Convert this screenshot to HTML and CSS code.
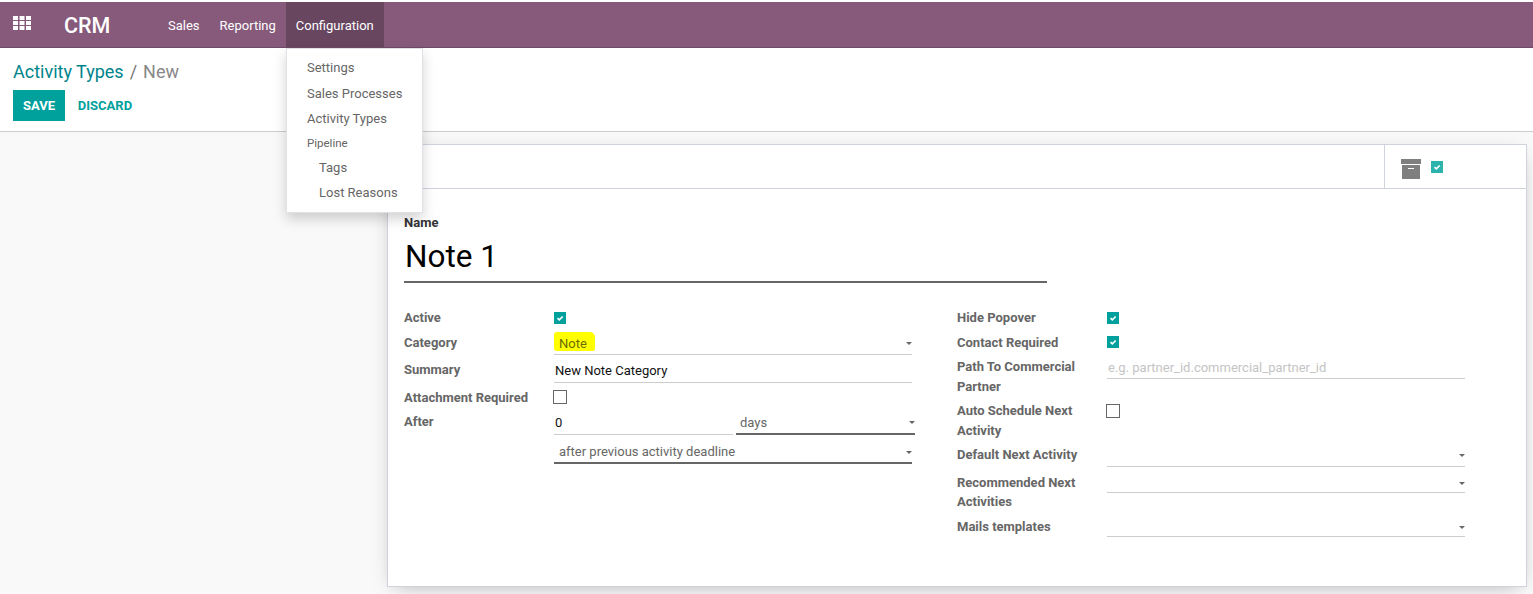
FILE: index.html
```html
<!DOCTYPE html>
<html lang="en">
<head>
<meta charset="utf-8">
<title>Activity Types - CRM</title>
<link rel="stylesheet" href="styles.css">
</head>
<body>
<header class="navbar">
  <a class="apps" aria-label="Apps">
    <svg width="18" height="14" viewBox="0 0 18 14"><path fill="#fff" d="M0 0h5v4H0zM6.500 0h5v4h-5zM13 0h5v4h-5zM0 5h5v4H0zM6.500 5h5v4h-5zM13 5h5v4h-5zM0 10h5v4H0zM6.500 10h5v4h-5zM13 10h5v4h-5z"/></svg>
  </a>
  <span class="brand">CRM</span>
  <nav class="menu">
    <a class="menu-item">Sales</a>
    <a class="menu-item">Reporting</a>
    <a class="menu-item active">Configuration</a>
  </nav>
</header>

<ul class="dropdown">
  <li class="dd-item">Settings</li>
  <li class="dd-item">Sales Processes</li>
  <li class="dd-item">Activity Types</li>
  <li class="dd-head">Pipeline</li>
  <li class="dd-item sub">Tags</li>
  <li class="dd-item sub">Lost Reasons</li>
</ul>

<section class="control-panel">
  <div class="breadcrumb"><a class="crumb-link">Activity Types</a><span class="crumb-sep">/</span><span class="crumb-cur">New</span></div>
  <div class="actions">
    <button class="btn-save">SAVE</button>
    <button class="btn-discard">DISCARD</button>
  </div>
</section>

<main class="content">
  <div class="sheet">
    <div class="sheet-top">
      <div class="button-box">
        <svg class="archive" width="20" height="20" viewBox="0 0 20 20"><path fill="#7f7f7f" d="M0 0h20v5H0zM1 6h18v14H1z"/><path fill="#fff" d="M7 9h6v1H7z"/></svg>
        <span class="check on"><svg viewBox="0 0 12 12" width="12" height="12"><path d="M3.500 6.200 5.300 7.800 8.700 4.500" fill="none" stroke="#fff" stroke-width="1.700"/></svg></span>
      </div>
    </div>
    <div class="sheet-body">
      <label class="name-label">Name</label>
      <div class="name-value">Note 1</div>
      <div class="groups">
        <div class="group">
          <div class="row r-active"><span class="lbl">Active</span><span class="val"><span class="check on"><svg viewBox="0 0 12 12" width="12" height="12"><path d="M3.500 6.200 5.300 7.800 8.700 4.500" fill="none" stroke="#fff" stroke-width="1.700"/></svg></span></span></div>
          <div class="row r-cat"><span class="lbl">Category</span><span class="val field select"><span class="mark">Note</span><i class="caret"></i></span></div>
          <div class="row r-sum"><span class="lbl">Summary</span><span class="val field dark">New Note Category</span></div>
          <div class="row r-att"><span class="lbl">Attachment Required</span><span class="val"><span class="check off"></span></span></div>
          <div class="row r-after"><span class="lbl">After</span>
            <span class="val after">
              <span class="field dark num">0</span>
              <span class="field select strong unit">days<i class="caret"></i></span>
            </span>
          </div>
          <div class="row r-dead"><span class="lbl"></span><span class="val field select strong">after previous activity deadline<i class="caret"></i></span></div>
        </div>
        <div class="group">
          <div class="row r2-hide"><span class="lbl">Hide Popover</span><span class="val"><span class="check on"><svg viewBox="0 0 12 12" width="12" height="12"><path d="M3.500 6.200 5.300 7.800 8.700 4.500" fill="none" stroke="#fff" stroke-width="1.700"/></svg></span></span></div>
          <div class="row r2-contact"><span class="lbl">Contact Required</span><span class="val"><span class="check on"><svg viewBox="0 0 12 12" width="12" height="12"><path d="M3.500 6.200 5.300 7.800 8.700 4.500" fill="none" stroke="#fff" stroke-width="1.700"/></svg></span></span></div>
          <div class="row r2-path"><span class="lbl">Path To Commercial Partner</span><span class="val field placeholder">e.g. partner_id.commercial_partner_id</span></div>
          <div class="row r2-auto"><span class="lbl">Auto Schedule Next Activity</span><span class="val"><span class="check off"></span></span></div>
          <div class="row r2-def"><span class="lbl">Default Next Activity</span><span class="val field select empty"><i class="caret"></i></span></div>
          <div class="row r2-rec"><span class="lbl">Recommended Next Activities</span><span class="val field select empty"><i class="caret"></i></span></div>
          <div class="row r2-mail"><span class="lbl">Mails templates</span><span class="val field select empty"><i class="caret"></i></span></div>
        </div>
      </div>
    </div>
  </div>
</main>
</body>
</html>
```
FILE: styles.css
```css
* { box-sizing: border-box; }
html, body { margin: 0; height: 100%; }
body {
  display: flex;
  flex-direction: column;
  height: 594px;
  overflow: hidden;
  background: #fff;
  font-family: Roboto, "Noto Sans", sans-serif;
  font-size: 13px;
  line-height: 20px;
  color: #666;
  padding-top: 2px;
  position: relative;
}

.navbar {
  height: 46px;
  flex: none;
  display: flex;
  align-items: stretch;
  background: #875a7b;
  border-bottom: 1px solid #6f4a66;
  color: #fff;
}
.apps { display: flex; align-items: center; padding: 0 0 3px 13px; width: 64px; }
.brand { font-size: 21.500px; font-weight: 500; line-height: 47px; width: 94px; }
.menu { display: flex; }
.menu-item { padding: 0 10px; line-height: 47px; height: 45px; color: #fff; }
.menu-item.active { background: #68465f; }

.dropdown {
  position: absolute;
  left: 286px;
  top: 48px;
  width: 137px;
  height: 165px;
  margin: 0;
  padding: 6px 0 0;
  list-style: none;
  background: #fff;
  border: 1px solid #dfe1e6;
  box-shadow: 0 6px 12px rgba(0, 0, 0, .175);
  z-index: 5;
}
.dd-item { height: 25px; line-height: 25px; padding-left: 20px; white-space: nowrap; }
.dd-item.sub { padding-left: 32px; }
.dd-item:nth-child(2), .dd-item:nth-child(3), .dd-head { position: relative; top: 1px; }
.dd-head { height: 25px; line-height: 25px; padding-left: 20px; font-size: 11.500px; }

.control-panel {
  height: 84px;
  flex: none;
  padding: 11px 13px 0;
  background: #fff;
  border-bottom: 1px solid #ccc;
}
.breadcrumb { font-size: 18px; line-height: 26px; height: 31px; }
.crumb-link { color: #00848c; }
.crumb-sep { padding: 0 6px; color: #777; }
.crumb-cur { color: #888; }
.actions { display: flex; align-items: stretch; height: 31px; }
.btn-save, .btn-discard {
  border: 0;
  padding: 0;
  font: 700 13px/31px Roboto, sans-serif;
}
.btn-save { width: 52px; background: #00a09d; color: #fff; }
.btn-discard { width: 80px; background: transparent; color: #00a09d; }

.content {
  flex: 1;
  min-height: 0;
  background: #f9f9f9;
  padding: 12px 6px 0 387px;
}
.sheet {
  height: 443px;
  background: #fff;
  border: 1px solid #cfd4dc;
  box-shadow: 0 5px 20px -8px rgba(0, 0, 0, .35);
}
.sheet-top {
  height: 44px;
  border-bottom: 1px solid #cfd4dc;
  display: flex;
  justify-content: flex-end;
}
.button-box {
  width: 142px;
  border-left: 1px solid #cfd4dc;
  display: flex;
  align-items: center;
  gap: 10px;
  padding-left: 16px;
}
.archive { margin-top: 5px; }

.check { display: inline-block; width: 12px; height: 12px; vertical-align: top; }
.check svg { display: block; }
.check.on { background: #00a09d; }
.check.off { width: 14px; height: 14px; border: 1px solid #666; background: #fff; }
.button-box .check.on { background: #2cb3ae; margin-top: 1px; }

.sheet-body { padding: 24px 16px 0; }
.name-label { display: block; font-weight: 700; font-size: 13px; line-height: 20px; color: #333; }
.name-value {
  width: 643px;
  height: 48px;
  margin-top: 2px;
  font-size: 31.500px;
  line-height: 44px;
  color: #000;
  border-bottom: 2px solid #666;
  padding-left: 1px;
}
.groups { display: grid; grid-template-columns: 553px 510px; margin-top: 25px; }
.group { display: flex; flex-direction: column; }
.row { display: flex; align-items: flex-start; }
.lbl { width: 150px; flex: none; font-weight: 700; color: #666; line-height: 20px; padding-right: 20px; }
.val { width: 358px; flex: none; }

.field { display: block; position: relative; height: 21px; line-height: 20px; border-bottom: 1px solid #ccc; padding-left: 1px; }
.dark { color: #111; }
.select { padding-left: 5px; }
.strong { border-bottom: 2px solid #666; height: 22px; }
.placeholder { color: #c4c4c4; }
.caret {
  position: absolute;
  right: 0;
  top: 9px;
  border-left: 3px solid transparent;
  border-right: 3px solid transparent;
  border-top: 3px solid #666;
}
.mark {
  background: #ffff00;
  color: #6b6b00;
  margin-left: -5px;
  padding: 4px 8px 0 5px;
  border-radius: 3px 5px 2px 3px;
}

.r-active { height: 25px; }
.r-active .val { padding-top: 4px; }
.r-cat { height: 27px; }
.r-cat .val { height: 22px; line-height: 22px; }
.r-sum { height: 28px; }
.r-sum .val { height: 23px; line-height: 22px; }
.r-att { height: 24px; }
.r-att .check { margin-left: -1px; margin-top: 2px; }
.r-after { height: 30px; }
.after { display: flex; width: 361px; gap: 3px; margin-top: 1px; }
.num { width: 179px; height: 22px; }
.unit { width: 179px; padding-left: 4px; }
.unit .caret { top: 8px; }

.r2-hide { height: 25px; }
.r2-hide .val { padding-top: 4px; }
.r2-contact { height: 24px; }
.r2-contact .val { padding-top: 3px; }
.r2-path { height: 44px; }
.r2-path .val { height: 22px; line-height: 22px; }
.r2-auto { height: 44px; }
.r2-auto .check { margin-left: -1px; margin-top: 3px; }
.r2-def { height: 28px; }
.r2-def .val { height: 22px; }
.r2-rec { height: 44px; }
.r2-rec .val { height: 20px; }
.r2-rec .lbl { line-height: 19px; }
.r2-mail .val { height: 20px; }
.empty .caret { top: 9px; }
```
